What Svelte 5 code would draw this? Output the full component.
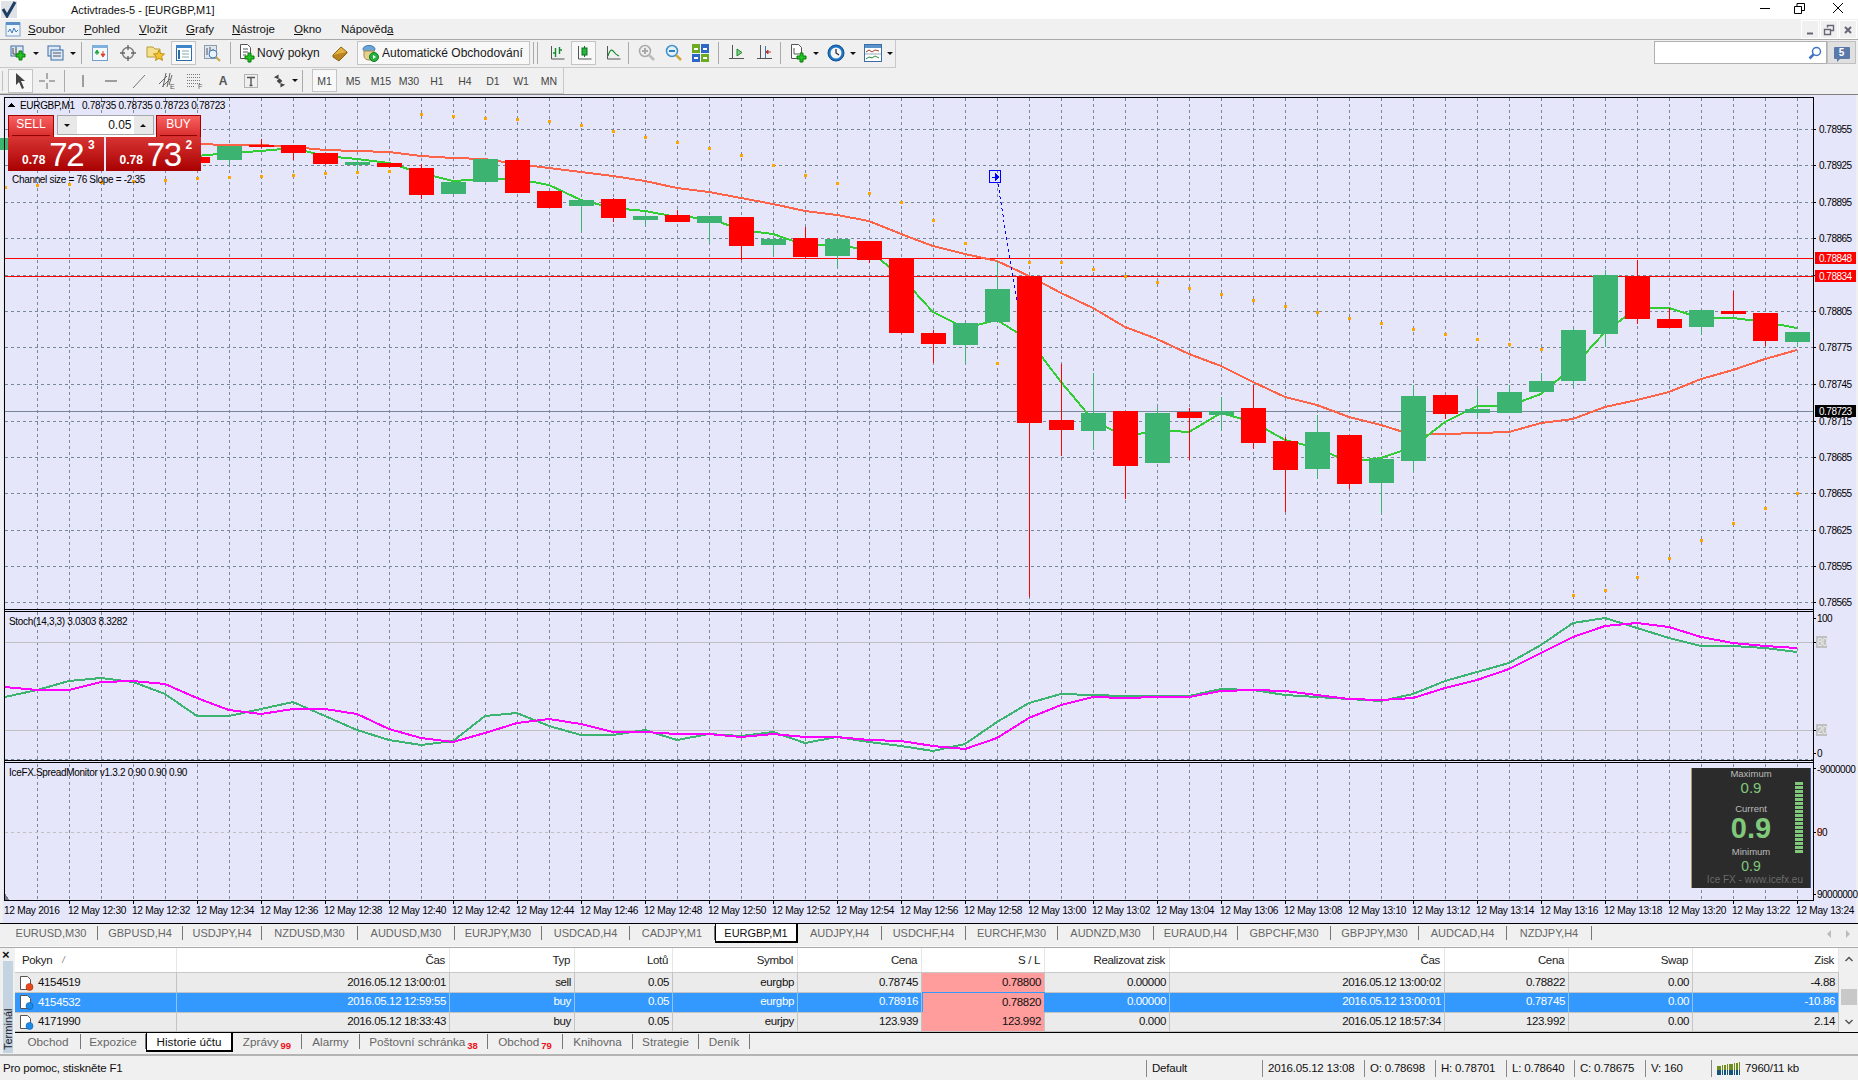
<script>
  const gridX = Array.from({ length: 56 }, (_, i) => 37 + 32 * i);
  const gridY = [129, 165, 202, 238, 275, 311, 347, 384, 421, 457, 493, 530, 566, 602];
  const priceLabels = [
    [129, '0.78955'], [165, '0.78925'], [202, '0.78895'], [238, '0.78865'], [311, '0.78805'], [347, '0.78775'],
    [384, '0.78745'], [421, '0.78715'], [457, '0.78685'], [493, '0.78655'], [530, '0.78625'], [566, '0.78595'], [602, '0.78565']
  ];

  // x, body top, body bottom, wick top, wick bottom, up
  const candles = [
    [5, 138, 150, 138, 150, 1], [197, 157, 163, 157, 163, 0], [229, 146, 160, 146, 165, 1], [261, 145, 147, 139, 148, 0],
    [293, 145, 153, 145, 160, 0], [325, 153, 164, 153, 165, 0], [357, 162, 165, 158, 172, 1], [389, 163, 167, 163, 168, 0],
    [421, 168, 195, 164, 199, 0], [453, 182, 194, 182, 194, 1], [485, 159, 182, 159, 182, 1], [517, 160, 193, 160, 193, 0],
    [549, 191, 208, 191, 208, 0], [581, 200, 206, 200, 232, 1], [613, 199, 218, 198, 222, 0], [645, 216, 220, 211, 226, 1],
    [677, 215, 222, 210, 222, 0], [709, 216, 223, 216, 243, 1], [741, 217, 246, 217, 260, 0], [773, 239, 245, 239, 256, 1],
    [805, 238, 257, 227, 259, 0], [837, 239, 256, 239, 268, 1], [869, 241, 260, 241, 263, 0], [901, 258, 333, 258, 334, 0],
    [933, 333, 344, 330, 363, 0], [965, 323, 345, 323, 364, 1], [997, 289, 322, 261, 322, 1], [1029, 276, 423, 276, 597, 0],
    [1061, 420, 430, 364, 456, 0], [1093, 413, 431, 373, 450, 1], [1125, 411, 466, 411, 499, 0], [1157, 413, 463, 407, 463, 1],
    [1189, 412, 418, 408, 460, 0], [1221, 411, 415, 397, 430, 1], [1253, 408, 443, 385, 449, 0], [1285, 441, 470, 437, 512, 0],
    [1317, 432, 469, 415, 478, 1], [1349, 435, 484, 435, 489, 0], [1381, 459, 483, 457, 514, 1], [1413, 396, 461, 385, 472, 1],
    [1445, 395, 414, 395, 419, 0], [1477, 409, 413, 389, 418, 1], [1509, 392, 413, 385, 413, 1], [1541, 381, 392, 373, 392, 1],
    [1573, 330, 381, 328, 387, 1], [1605, 275, 334, 270, 347, 1], [1637, 276, 319, 260, 324, 0], [1669, 319, 328, 308, 328, 0],
    [1701, 310, 327, 310, 334, 1], [1733, 311, 314, 291, 314, 0], [1765, 313, 341, 313, 346, 0], [1797, 332, 342, 332, 347, 1]
  ];

  const pts = (ys, first) => ys.map((y, i) => `${5 + 32 * (first + i)},${y}`).join(' ');

  const slowMa = pts([144, 145, 145, 147, 150, 151, 152, 156, 158, 159, 164, 168, 172, 176, 181, 188, 192, 198, 204, 211, 215, 221, 234, 246, 254, 261, 276, 293, 308, 327, 339, 354, 366, 382, 397, 405, 417, 425, 435, 434, 433, 432, 423, 419, 407, 400, 392, 379, 370, 359, 350], 6);
  const fastMa = pts([156, 153, 151, 148, 156, 159, 163, 173, 181, 179, 179, 185, 200, 208, 211, 217, 218, 230, 234, 245, 245, 250, 277, 312, 328, 320, 340, 382, 420, 437, 430, 432, 413, 422, 440, 448, 462, 458, 447, 422, 406, 406, 394, 367, 332, 308, 308, 318, 318, 322, 328], 6);
  const stochMain = pts([697, 690, 681, 678, 682, 694, 716, 716, 709, 702, 716, 730, 740, 745, 741, 716, 713, 726, 735, 735, 730, 740, 734, 736, 732, 743, 737, 742, 746, 751, 744, 722, 703, 694, 695, 696, 696, 696, 689, 690, 695, 697, 699, 701, 694, 681, 672, 663, 645, 623, 618, 628, 638, 646, 646, 648, 652], 0);
  const stochSignal = pts([687, 690, 690, 682, 681, 684, 698, 710, 714, 709, 709, 714, 729, 738, 742, 733, 723, 719, 724, 732, 732, 734, 734, 737, 734, 737, 737, 740, 741, 746, 749, 738, 718, 705, 697, 698, 697, 697, 691, 690, 691, 695, 699, 700, 698, 688, 680, 669, 653, 637, 626, 623, 627, 637, 643, 646, 648], 0);

  const dots = [
    [421, 114], [453, 116], [485, 118], [517, 119], [549, 121], [581, 125], [613, 131], [645, 137], [677, 142], [709, 148], [741, 155], [773, 165], [805, 175], [837, 183], [869, 193], [901, 202], [933, 220], [965, 243], [997, 363],
    [5, 187], [37, 185], [69, 184], [101, 182], [133, 181], [165, 180], [197, 178], [229, 177], [261, 176], [293, 175], [325, 173], [357, 172], [389, 171],
    [1029, 262], [1061, 262], [1093, 269], [1125, 276], [1157, 282], [1189, 288], [1221, 294], [1253, 300], [1285, 306], [1317, 312], [1349, 318], [1381, 323], [1413, 329], [1445, 334], [1477, 339], [1509, 344], [1541, 349],
    [1573, 595], [1605, 590], [1637, 577], [1669, 558], [1701, 540], [1733, 523], [1765, 508], [1797, 493]
  ];

  const timeLabels = Array.from({ length: 28 }, (_, i) => {
    const mins = 12 * 60 + 30 + i * 2;
    return { x: 68 + i * 64, text: `12 May ${Math.floor(mins / 60)}:${String(mins % 60).padStart(2, '0')}` };
  });

  const symbols = [
    ['EURUSD,M30', 93], ['GBPUSD,H4', 85], ['USDJPY,H4', 79], ['NZDUSD,M30', 96], ['AUDUSD,M30', 97], ['EURJPY,M30', 87],
    ['USDCAD,H4', 88], ['CADJPY,M1', 85], ['EURGBP,M1', 83], ['AUDJPY,H4', 84], ['USDCHF,H4', 84], ['EURCHF,M30', 92],
    ['AUDNZD,M30', 96], ['EURAUD,H4', 84], ['GBPCHF,M30', 93], ['GBPJPY,M30', 88], ['AUDCAD,H4', 88], ['NZDJPY,H4', 85]
  ];

  const termTabs = [
    ['Obchod', 65], ['Expozice', 65], ['Historie účtu', 87], ['Zprávy', 69, '99'], ['Alarmy', 58],
    ['Poštovní schránka', 128, '38'], ['Obchod', 75, '79'], ['Knihovna', 70], ['Strategie', 66], ['Deník', 51]
  ];

  const columns = [
    ['Pokyn', 'left'], ['Čas'], ['Typ'], ['Lotů'], ['Symbol'], ['Cena'], ['S / L', 'sl'], ['Realizovat zisk'], ['Čas'], ['Cena'], ['Swap'], ['Zisk']
  ];
  const rows = [
    ['4154519', '2016.05.12 13:00:01', 'sell', '0.05', 'eurgbp', '0.78745', '0.78800', '0.00000', '2016.05.12 13:00:02', '0.78822', '0.00', '-4.88'],
    ['4154532', '2016.05.12 12:59:55', 'buy', '0.05', 'eurgbp', '0.78916', '0.78820', '0.00000', '2016.05.12 13:00:01', '0.78745', '0.00', '-10.86'],
    ['4171990', '2016.05.12 18:33:43', 'buy', '0.05', 'eurjpy', '123.939', '123.992', '0.000', '2016.05.12 18:57:34', '123.992', '0.00', '2.14']
  ];
  const periods = ['M5', 'M15', 'M30', 'H1', 'H4', 'D1', 'W1', 'MN'];
  const statusCells = ['2016.05.12 13:08', 'O: 0.78698', 'H: 0.78701', 'L: 0.78640', 'C: 0.78675', 'V: 160'];
</script>

<div class="app">
  <header class="titlebar">
    <svg class="app-icon" width="16" height="17" viewBox="0 0 16 17"><rect width="16" height="17" fill="#dfe3e8"/><path d="M2 8l4 7L14 1" fill="none" stroke="#1d3f66" stroke-width="3"/></svg>
    <span class="title-text">Activtrades-5 - [EURGBP,M1]</span>
    <div class="win-btns">
      <svg width="38" height="19" viewBox="0 0 38 19"><path d="M14 8.500h10" stroke="#000" fill="none"/></svg>
      <svg width="38" height="19" viewBox="0 0 38 19"><path d="M10.500 6.500h7v7h-7zM13 6V3.500h7.500v7H18" stroke="#000" fill="none"/></svg>
      <svg width="32" height="19" viewBox="0 0 32 19"><path d="M11 3l10 10M21 3L11 13" stroke="#000" fill="none"/></svg>
    </div>
  </header>

  <nav class="menubar">
    <svg class="menu-icon" width="16" height="16" viewBox="0 0 16 16"><rect x="1" y="2" width="14" height="13" fill="#eef4fb" stroke="#7b9ec4"/><rect x="1" y="1" width="14" height="3" fill="#5b8fc9"/><path d="M3 11l2-3 2 4 2-5 2 4 2-2" fill="none" stroke="#3c78b8"/></svg>
    <span class="m" style="--m:28px"><u>S</u>oubor</span>
    <span class="m" style="--m:84px"><u>P</u>ohled</span>
    <span class="m" style="--m:139px"><u>V</u>ložit</span>
    <span class="m" style="--m:186px"><u>G</u>rafy</span>
    <span class="m" style="--m:232px"><u>N</u>ástroje</span>
    <span class="m" style="--m:294px"><u>O</u>kno</span>
    <span class="m" style="--m:341px">Nápověd<u>a</u></span>
    <div class="mdi">
      <span class="mdi-btn"><svg width="10" height="10" viewBox="0 0 10 10"><path d="M2 8.500h6" stroke="#667" stroke-width="2"/></svg></span>
      <span class="mdi-btn"><svg width="12" height="12" viewBox="0 0 12 12"><path d="M1.500 5.500h6v5h-6zM4.500 3.500v-2h6v5h-3" stroke="#667" fill="none" stroke-width="1.400"/></svg></span>
      <span class="mdi-btn"><svg width="10" height="10" viewBox="0 0 10 10"><path d="M2 2l6 6M8 2l-6 6" stroke="#667" stroke-width="2"/></svg></span>
    </div>
  </nav>

  <div class="toolrow one">
    <div class="toolbar">
      <span class="grip"></span>
      <button class="drop">
        <svg width="18" height="18" viewBox="0 0 18 18"><rect x="1" y="2" width="12" height="10" fill="#dfe9f6" stroke="#3a6ea5"/><path d="M3 4v6h8M6 3v6" stroke="#444" fill="none"/><path d="M9 7h3v3h3v3h-3v3H9v-3H6v-3h3z" fill="#25c225" stroke="#0a7a0a"/></svg>
        <i class="caret"></i>
      </button>
      <button class="drop narrow">
        <svg width="18" height="18" viewBox="0 0 18 18"><rect x="1" y="2" width="12" height="10" fill="#dfe9f6" stroke="#3a6ea5"/><rect x="4" y="6" width="12" height="10" fill="#dfe9f6" stroke="#3a6ea5"/><path d="M6 9h8M6 12h8" stroke="#556"/></svg>
        <i class="caret"></i>
      </button>
      <span class="sep"></span>
      <button class="ib">
        <svg width="18" height="18" viewBox="0 0 18 18"><rect x="1.500" y="1.500" width="15" height="15" fill="#f4f8fc" stroke="#6f9fcf"/><rect x="1" y="1" width="16" height="3" fill="#7fb0de"/><path d="M6 11V7M4 9l2-3 2 3z" fill="#21a83a" stroke="#21a83a"/><path d="M12 7v4M10 10l2 3 2-3z" fill="#e0452b" stroke="#e0452b"/></svg>
      </button>
      <button class="ib">
        <svg width="18" height="18" viewBox="0 0 18 18"><circle cx="9" cy="9" r="5.500" fill="none" stroke="#7a7a7a" stroke-width="1.400"/><path d="M9 1v5M9 12v5M1 9h5M12 9h5" stroke="#666" stroke-width="1.400"/></svg>
      </button>
      <button class="ib">
        <svg width="20" height="18" viewBox="0 0 20 18"><path d="M1 3h6l2 2h5v8H1z" fill="#f5e08c" stroke="#b99a3a"/><path d="M13 6l1.600 3.600 3.900.4-2.900 2.600.9 3.800L13 14.400 9.500 16.400l.9-3.800L7.500 10l3.900-.4z" fill="#f2c230" stroke="#c08f10"/></svg>
      </button>
      <button class="ib active">
        <svg width="18" height="18" viewBox="0 0 18 18"><rect x="1.500" y="1.500" width="15" height="15" fill="#fff" stroke="#2e6da8"/><rect x="1" y="1" width="16" height="3" fill="#3c85c9"/><path d="M4 6v9" stroke="#2e6da8" stroke-width="2"/><path d="M7 7h7M7 10h7M7 13h7" stroke="#8aa"/></svg>
      </button>
      <button class="ib">
        <svg width="20" height="20" viewBox="0 0 20 20"><rect x="2.500" y="2.500" width="12" height="13" fill="#dfe6ee" stroke="#8a9bb0"/><path d="M5 5v7M8 4v6M11 6v5" stroke="#556"/><circle cx="11" cy="11" r="4" fill="#eaf3fb" stroke="#3f78b5"/><path d="M14 14l4 4" stroke="#c9a94a" stroke-width="2"/></svg>
      </button>
      <span class="sep"></span>
      <button class="labelled">
        <svg width="18" height="20" viewBox="0 0 18 20"><path d="M2.500 1.500h7l3 3v11h-10z" fill="#fff" stroke="#555"/><path d="M5 6h5M5 9h5M5 12h3" stroke="#555"/><path d="M10 10h3v3h3v3h-3v3h-3v-3H7v-3h3z" fill="#25c225" stroke="#0a7a0a"/></svg>
        <span>Nový pokyn</span>
      </button>
      <button class="ib book">
        <svg width="18" height="18" viewBox="0 0 18 18"><path d="M2 11l8-8 6 5-8 8z" fill="#e0b040" stroke="#8c6414"/><path d="M2 11v2l6 4 8-8V8" fill="#b9841f" stroke="#8c6414"/></svg>
      </button>
      <button class="labelled auto">
        <svg width="18" height="18" viewBox="0 0 18 18"><ellipse cx="8" cy="5" rx="6" ry="3.500" fill="#6aa6d8" stroke="#3f78b5"/><path d="M3 7h10v5a5 4 0 0 1-10 0z" fill="#e6cf8f" stroke="#a5894a"/><circle cx="13" cy="13" r="4.500" fill="#24b33c" stroke="#0e7a22"/><path d="M12 11l3 2-3 2z" fill="#fff"/></svg>
        <span>Automatické Obchodování</span>
      </button>
      <span class="sep dbl"></span>
      <button class="ib chart-bar">
        <svg width="16" height="16" viewBox="0 0 16 16"><path d="M2.500 1v13h13" fill="none" stroke="#555"/><path d="M6.500 3v9M6.500 8H4M10.500 2v7M10.500 5H13" stroke="#118a2c" stroke-width="1.400"/></svg>
      </button>
      <button class="ib active chart-candle">
        <svg width="16" height="16" viewBox="0 0 16 16"><path d="M2.500 1v13h13" fill="none" stroke="#555"/><rect x="6" y="3" width="5" height="7" fill="#25b63c" stroke="#0c6e1e"/><path d="M8.500 1v2M8.500 10v2" stroke="#0c6e1e"/></svg>
      </button>
      <button class="ib chart-line">
        <svg width="16" height="16" viewBox="0 0 16 16"><path d="M2.500 1v13h13" fill="none" stroke="#555"/><path d="M3 11c2-7 4-7 6-4s3 3 5 4" fill="none" stroke="#118a2c" stroke-width="1.200"/></svg>
      </button>
      <span class="sep tight"></span>
      <button class="ib zoomer">
        <svg width="18" height="18" viewBox="0 0 18 18"><circle cx="7" cy="7" r="5.500" fill="#eee" stroke="#aaa" stroke-width="1.500"/><path d="M4 7h6M7 4v6" stroke="#aaa" stroke-width="2"/><path d="M11 11l5 5" stroke="#bbb" stroke-width="2.500"/></svg>
      </button>
      <button class="ib zoomer">
        <svg width="18" height="18" viewBox="0 0 18 18"><circle cx="7" cy="7" r="5.500" fill="#e3f1fb" stroke="#3d8fce" stroke-width="1.500"/><path d="M4 7h6" stroke="#2f7fbf" stroke-width="2"/><path d="M11 11l5 5" stroke="#d0a840" stroke-width="2.500"/></svg>
      </button>
      <button class="ib zoomer">
        <svg width="17" height="18" viewBox="0 0 17 18"><rect x="0" y="0" width="8" height="9" fill="#6cab1f"/><rect x="9" y="0" width="8" height="9" fill="#2f67c8"/><rect x="0" y="10" width="8" height="8" fill="#2f67c8"/><rect x="9" y="10" width="8" height="8" fill="#6cab1f"/><path d="M2 5h4M11 5h4M2 14h4M11 14h4" stroke="#fff" stroke-width="2"/></svg>
      </button>
      <span class="sep"></span>
      <button class="ib shifter">
        <svg width="16" height="18" viewBox="0 0 16 18"><path d="M3.500 1v14M0 14.500h15" stroke="#555" fill="none"/><path d="M8 5v7l5-3.500z" fill="#7fd07f" stroke="#1d8a2e"/></svg>
      </button>
      <button class="ib shifter">
        <svg width="16" height="18" viewBox="0 0 16 18"><path d="M3.500 1v14M0 14.500h15" stroke="#555" fill="none"/><path d="M8.500 2v12" stroke="#2c7ab8"/><path d="M14 8h-3M11 6v4l-2-2z" fill="#b33" stroke="#b33"/></svg>
      </button>
      <span class="sep near"></span>
      <button class="drop wide">
        <svg width="18" height="20" viewBox="0 0 18 20"><path d="M1.500 1.500h7l3 3v11h-10z" fill="#fff" stroke="#555"/><path d="M4 5v6M4 11h5" stroke="#555"/><path d="M10 10h3v3h3v3h-3v3h-3v-3H7v-3h3z" fill="#25c225" stroke="#0a7a0a"/></svg>
        <i class="caret"></i>
      </button>
      <button class="drop wide">
        <svg width="18" height="18" viewBox="0 0 18 18"><circle cx="9" cy="9" r="8" fill="#1e74c4" stroke="#0d4f8f"/><circle cx="9" cy="9" r="5.500" fill="#f4f6f8"/><path d="M9 5v4l3 2" fill="none" stroke="#222" stroke-width="1.200"/></svg>
        <i class="caret"></i>
      </button>
      <button class="drop wide">
        <svg width="18" height="18" viewBox="0 0 18 18"><rect x="0.500" y="0.500" width="17" height="17" fill="#fff" stroke="#3a6ea5"/><rect x="1" y="1" width="16" height="3" fill="#5b93cf"/><path d="M2 8l3-2 3 2 3-2 4 1" fill="none" stroke="#9c3a2a"/><path d="M1 10h16" stroke="#9ab"/><path d="M2 15l3-2 3 1 3-2 4 2" fill="none" stroke="#2a8c3a"/></svg>
        <i class="caret"></i>
      </button>
    </div>
    <div class="search-wrap">
      <div class="search">
        <svg width="14" height="14" viewBox="0 0 14 14"><circle cx="8.500" cy="5.500" r="4" fill="#fff" stroke="#3f73c4" stroke-width="1.500"/><path d="M5.500 8.500L1.500 12.500" stroke="#3f73c4" stroke-width="2.500"/></svg>
      </div>
      <div class="msg">
        <span class="bubble">5</span>
      </div>
    </div>
  </div>

  <div class="toolrow two">
    <div class="toolbar">
      <span class="grip"></span>
      <button class="ib active arrow">
        <svg width="12" height="18" viewBox="0 0 12 18"><path d="M1 1l9 8H6l3 7-2 1-3-7-3 3z" fill="#444"/></svg>
      </button>
      <button class="ib tool">
        <svg width="16" height="16" viewBox="0 0 16 16"><path d="M8 0v6M8 10v6M0 8h6M10 8h6" stroke="#666"/></svg>
      </button>
      <span class="sep"></span>
      <button class="ib line">
        <svg width="16" height="16" viewBox="0 0 16 16"><path d="M8 2v12" stroke="#666" stroke-width="1.200"/></svg>
      </button>
      <button class="ib line">
        <svg width="16" height="16" viewBox="0 0 16 16"><path d="M2 8h12" stroke="#666" stroke-width="1.200"/></svg>
      </button>
      <button class="ib line">
        <svg width="16" height="16" viewBox="0 0 16 16"><path d="M2 15L14 2" stroke="#777"/></svg>
      </button>
      <button class="ib line">
        <svg width="18" height="18" viewBox="0 0 18 18"><path d="M1 12l8-8M4 15l8-8M8 1l-3 14M12 1L9 15M14 3L11 13" stroke="#666" fill="none"/><text x="12" y="17" class="sub">E</text></svg>
      </button>
      <button class="ib line">
        <svg width="18" height="18" viewBox="0 0 18 18"><path d="M1 2.500h13M1 5.500h13M1 8.500h13M1 11.500h13M1 14.500h8" stroke="#777" stroke-dasharray="1 1"/><text x="12" y="17" class="sub">F</text></svg>
      </button>
      <button class="ib line a">A</button>
      <button class="ib line">
        <svg width="16" height="16" viewBox="0 0 16 16"><rect x="1.500" y="1.500" width="13" height="13" fill="none" stroke="#777" stroke-dasharray="1 1"/><path d="M4 4.500h8M8 4.500v8M6.500 12.500h3" stroke="#555" stroke-width="1.400"/></svg>
      </button>
      <button class="drop tool-drop">
        <svg width="16" height="16" viewBox="0 0 16 16"><path d="M2 4l5-3v5zM14 12l-5 3v-5z" fill="#444"/><path d="M5 8l3 3 3-3-3-3z" fill="#444"/></svg>
        <i class="caret"></i>
      </button>
      <span class="sep"></span>
      <button class="period active">M1</button>
      {#each periods as p}
        <button class="period">{p}</button>
      {/each}
    </div>
  </div>

  <main class="chart-area">
    <svg class="chart" width="1858" height="829" viewBox="0 94 1858 829">
      <rect x="3" y="95" width="1853" height="828" fill="#e6e6fa"/>
      <g shape-rendering="crispEdges">
        <path d="M0 94.500H1858" stroke="#808080"/>
        <!-- grid -->
        {#each gridX as x}
          <path class="grid" d="M{x + 0.5} 98V609M{x + 0.5} 612V760M{x + 0.5} 764V900"/>
        {/each}
        {#each gridY as y}
          <path class="grid" d="M5 {y + 0.5}H1813"/>
        {/each}
        <path class="level" d="M5 642.500H1813M5 730.500H1813"/>
        <path class="zero" d="M5 832.500H1691"/>
        <path class="grid" d="M5 759.500H1813"/>

        <!-- price lines -->
        <path d="M5 258.500H1813" stroke="#f00" fill="none"/>
        <path d="M5 276.500H1813" stroke="#f00" fill="none"/>
        <path d="M5 411.500H1813" stroke="#778899" fill="none"/>

        <polyline points={slowMa} class="ln" stroke="#ff6347"/>
        <polyline points={fastMa} class="ln" stroke="#32cd32"/>

        {#each candles as [x, top, bottom, wt, wb, up]}
          <rect x={x} y={wt} width="1" height={wb - wt} fill={up ? '#3cb371' : '#f00'}/>
          <rect x={x - 12} y={top} width="25" height={bottom - top} fill={up ? '#3cb371' : '#f00'}/>
        {/each}

        {#each dots as [x, y]}
          <rect x={x - 1} y={y - 1} width="3" height="3" fill="#ffa500"/>
        {/each}

        <rect x="989.500" y="170.500" width="11" height="12" fill="none" stroke="#00f"/>
        <path d="M992 177h6M995 173l4 4-4 4z" fill="#00f" stroke="#00f"/>
        <path d="M998 184L1017 303" stroke="#00f" stroke-dasharray="3 3" fill="none"/>

        <polyline points={stochMain} class="ln" stroke="#3cb371"/>
        <polyline points={stochSignal} class="ln" stroke="#f0f"/>

        <!-- frames -->
        <path class="frame" d="M4.500 97.500H1813.500V900.500H4.500ZM4.500 609.500H1813.500M4.500 611.500H1813.500M4.500 760.500H1813.500M4.500 762.500H1813.500"/>
        {#each gridY as y}
          <path d="M1813 {y + 0.5}h3" stroke="#000"/>
        {/each}
        <path d="M1813 618.500h3M1813 642.500h3M1813 730.500h3M1813 753.500h3M1813 768.500h3M1813 832.500h3M1813 894.500h3" stroke="#000"/>
        {#each timeLabels as t}
          <path d="M{t.x + 1.500} 900v4" stroke="#000"/>
        {/each}
        <path d="M5 893v7h4z" fill="#778"/>
        <path d="M8 107l3.500-4 3.500 4z" fill="#000"/>
      </g>

      <text x="20" y="109" class="t">EURGBP,M1&nbsp;&nbsp;&nbsp;0.78735 0.78735 0.78723 0.78723</text>
      <text x="12" y="183" class="t">Channel size = 76 Slope = -2.35</text>
      <text x="9" y="625" class="t">Stoch(14,3,3) 3.0303 8.3282</text>
      <text x="9" y="776" class="t">IceFX.SpreadMonitor v1.3.2 0.90 0.90 0.90</text>

      {#each priceLabels as [y, label]}
        <text x="1819" y={y + 4} class="t axis">{label}</text>
      {/each}
      <rect x="1815" y="252" width="41" height="12" fill="#f00"/>
      <text x="1819" y="262" class="t axis white">0.78848</text>
      <rect x="1815" y="270" width="41" height="12" fill="#f00"/>
      <text x="1819" y="280" class="t axis white">0.78834</text>
      <rect x="1815" y="405" width="41" height="12" fill="#000"/>
      <text x="1819" y="415" class="t axis white">0.78723</text>

      <text x="1817" y="622" class="t axis">100</text>
      <rect x="1816" y="636" width="11" height="12" fill="#c0c0c0"/>
      <text x="1817" y="646" class="t axis pale">80</text>
      <rect x="1816" y="724" width="11" height="12" fill="#c0c0c0"/>
      <text x="1817" y="734" class="t axis pale">20</text>
      <text x="1817" y="757" class="t axis">0</text>
      <text x="1817" y="773" class="t axis">-9000000</text>
      <text x="1817" y="836" class="t axis">90</text>
      <text x="1817" y="836" class="t axis redz">0</text>
      <text x="1817" y="898" class="t axis">90000000</text>

      <text x="4" y="914" class="t time">12 May 2016</text>
      {#each timeLabels as t}
        <text x={t.x} y="914" class="t time">{t.text}</text>
      {/each}
    </svg>

    <div class="trade">
      <div class="trade-top">
        <button class="side"><span>SELL</span></button>
        <div class="lots">
          <span class="spin"><i class="tri down"></i></span>
          <span class="lot-val">0.05</span>
          <span class="spin"><i class="tri up"></i></span>
        </div>
        <button class="side buy"><span>BUY</span></button>
      </div>
      <div class="trade-bottom">
        <div class="quote"><small>0.78</small><strong>72</strong><sup>3</sup></div>
        <div class="quote"><small>0.78</small><strong>73</strong><sup>2</sup></div>
      </div>
    </div>

    <div class="spread">
      <div class="sp-label">Maximum</div>
      <div class="sp-val">0.9</div>
      <div class="sp-label cur">Current</div>
      <div class="sp-big">0.9</div>
      <div class="sp-label min">Minimum</div>
      <div class="sp-val small">0.9</div>
      <div class="sp-credit">Ice FX - www.icefx.eu</div>
      <div class="sp-meter"></div>
    </div>
  </main>

  <div class="symbols">
    {#each symbols as [name, w]}
      <span class="sym" class:active={name === 'EURGBP,M1'} style="width:{w}px">{name}</span>
    {/each}
    <span class="sym-arrows">
      <svg width="8" height="10" viewBox="0 0 8 10"><path d="M6 1L2 5l4 4" fill="#bbb"/></svg>
      <svg width="8" height="10" viewBox="0 0 8 10"><path d="M2 1l4 4-4 4" fill="#bbb"/></svg>
    </span>
  </div>

  <section class="terminal">
    <aside class="term-side">
      <span class="term-close">×</span>
      <span class="term-label">Terminál</span>
    </aside>
    <div class="term-main">
      <div class="term-table-wrap">
        <div class="term-table">
          <div class="tr head">
            {#each columns as [label, kind]}
              <div class="td" class:left={kind === 'left'}>
                {label}{#if kind === 'left'}<em class="sort">/</em>{/if}
              </div>
            {/each}
          </div>
          {#each rows as row, r}
            <div class="tr" class:sel={r === 1}>
              {#each row as cell, c}
                <div class="td" class:left={c === 0} class:stop={c === 6}>
                  {#if c === 0}
                    <svg width="15" height="16" viewBox="0 0 15 16"><path d="M1.500 1.500h7l3 3v10h-10z" fill="#fff" stroke="#555"/><circle cx="10.500" cy="12" r="3.500" fill={r === 0 ? '#e8481c' : '#1c8ae8'} stroke={r === 0 ? '#a52c08' : '#0c5fa8'} stroke-width="0.600"/></svg>
                  {/if}
                  {cell}
                </div>
              {/each}
            </div>
          {/each}
        </div>
        <div class="scrollbar">
          <svg width="10" height="8" viewBox="0 0 10 8"><path d="M1.500 6L5 2.500 8.500 6" fill="none" stroke="#555" stroke-width="1.500"/></svg>
          <span class="thumb"></span>
          <svg width="10" height="8" viewBox="0 0 10 8"><path d="M1.500 2L5 5.500 8.500 2" fill="none" stroke="#555" stroke-width="1.500"/></svg>
        </div>
      </div>
      <div class="term-tabs">
        {#each termTabs as [name, w, count]}
          <span class="ttab" class:active={name === 'Historie účtu'} style="width:{w}px">{name}{#if count}<b>{count}</b>{/if}</span>
        {/each}
      </div>
    </div>
  </section>

  <footer class="status">
    <span class="st-help">Pro pomoc, stiskněte F1</span>
    <span class="st">Default</span>
    {#each statusCells as cell}
      <span class="st">{cell}</span>
    {/each}
    <span class="st traffic">
      <svg width="24" height="14" viewBox="0 0 24 14" shape-rendering="crispEdges">
        {#each Array(10) as _, i}
          <rect x={i * 2.4} y={5 - i * 0.4} width="1.600" height={4 + i * 0.4} fill="#6f8c1c"/>
          <rect x={i * 2.4} y="9" width="1.600" height="5" fill="#14527a"/>
        {/each}
      </svg>
      7960/11 kb
    </span>
  </footer>
</div>

<style>
  :global(body) {
    margin: 0;
    background: #f0f0f0;
  }

  .app {
    width: 1858px;
    height: 1080px;
    overflow: hidden;
    display: flex;
    flex-direction: column;
    background: #f0f0f0;
    color: #111;
    font-family: "Liberation Sans", sans-serif;
    font-size: 11px;
  }

  button {
    font: inherit;
    color: inherit;
    border: 0;
    padding: 0;
    background: transparent;
  }

  /* window chrome */
  .titlebar {
    height: 19px;
    flex-shrink: 0;
    background: #fff;
    display: flex;
    align-items: center;
    position: relative;
  }

  .app-icon {
    margin-left: 1px;
  }

  .title-text {
    margin-left: 54px;
    font-size: 11px;
  }

  .win-btns {
    margin-left: auto;
    display: flex;
    margin-right: 4px;
  }

  .menubar {
    height: 20px;
    flex-shrink: 0;
    border-bottom: 1px solid #a9a9a9;
    display: flex;
    align-items: center;
    position: relative;
    font-size: 11.500px;
  }

  .menu-icon {
    margin-left: 5px;
  }

  .m {
    position: absolute;
    left: var(--m);
  }

  .mdi {
    margin-left: auto;
    display: flex;
    gap: 1px;
    margin-right: 1px;
    align-self: flex-end;
  }

  .mdi-btn {
    width: 16px;
    height: 17px;
    border: 1px solid #fff;
    display: flex;
    align-items: center;
    justify-content: center;
  }

  /* toolbars */
  .toolrow {
    flex-shrink: 0;
    display: flex;
    justify-content: space-between;
  }

  .toolrow.one {
    height: 28px;
  }

  .toolrow.two {
    height: 26px;
  }

  .toolbar {
    display: flex;
    align-items: center;
    height: 100%;
    box-sizing: border-box;
    border-right: 1px solid #c8c8c8;
    border-bottom: 1px solid #c8c8c8;
  }

  .one .toolbar {
    width: 896px;
    padding-bottom: 1px;
  }

  .two .toolbar {
    width: 564px;
  }

  .grip {
    width: 1px;
    height: 20px;
    margin: 0 5px 0 2px;
    background: #c0c0c0;
  }

  .sep {
    width: 1px;
    height: 22px;
    background: #aaa;
    margin: 0 4px;
    flex-shrink: 0;
  }

  .sep.dbl {
    width: 3px;
    border-left: 1px solid #aaa;
    border-right: 1px solid #aaa;
    background: transparent;
    margin: 0 5px 0 3px;
  }

  .sep.tight {
    margin: 0 4px 0 0;
  }

  .sep.near {
    margin: 0 4px 0 1px;
  }

  .ib {
    width: 28px;
    height: 24px;
    flex-shrink: 0;
    display: flex;
    align-items: center;
    justify-content: center;
    box-sizing: border-box;
  }

  .ib.active {
    width: 25px;
    margin: 0 2px 0 1px;
    background: #f8f8f8;
    border: 1px solid #c4c4c4;
  }

  .drop {
    height: 24px;
    width: 37px;
    flex-shrink: 0;
    display: flex;
    align-items: center;
    gap: 2px;
    padding-left: 3px;
    box-sizing: border-box;
  }

  .drop.narrow {
    width: 33px;
  }

  .drop.wide {
    width: 37px;
    padding-left: 5px;
  }

  .caret {
    width: 0;
    height: 0;
    margin-left: 3px;
    border-left: 3px solid transparent;
    border-right: 3px solid transparent;
    border-top: 3px solid #111;
  }

  .labelled {
    height: 24px;
    display: flex;
    align-items: center;
    gap: 1px;
    flex-shrink: 0;
    font-size: 12px;
    color: #1a1a1a;
    white-space: nowrap;
    padding-left: 3px;
    width: 89px;
  }

  .ib.book {
    width: 32px;
  }

  .labelled.auto {
    width: 173px;
    box-sizing: border-box;
    background: #f8f8f8;
    border: 1px solid #c4c4c4;
    padding-left: 3px;
    margin-left: 1px;
    gap: 3px;
  }

  .ib.chart-bar {
    width: 28px;
  }

  .ib.active.chart-candle {
    width: 25px;
    margin: 0 2px 0 0;
  }

  .ib.chart-line {
    width: 30px;
  }

  .ib.zoomer {
    width: 27px;
  }

  .two .ib.arrow {
    width: 25px;
    margin: 0;
  }

  .ib.tool {
    width: 27px;
  }

  .line.a {
    font-size: 12px;
    font-weight: 700;
    color: #555;
  }

  .drop.tool-drop {
    width: 33px;
    padding-left: 7px;
  }

  .sub {
    font-size: 7px;
    fill: #555;
  }

  .period {
    width: 28px;
    height: 23px;
    flex-shrink: 0;
    color: #444;
    font-size: 10.500px;
    box-sizing: border-box;
  }

  .period.active {
    width: 25px;
    margin-right: 2px;
    margin-left: 5px;
    background: #f8f8f8;
    border: 1px solid #c4c4c4;
  }

  .search-wrap {
    display: flex;
    align-items: flex-start;
    padding-top: 1px;
    margin-right: 2px;
    height: 23px;
  }

  .search {
    width: 173px;
    height: 23px;
    box-sizing: border-box;
    background: #fff;
    border: 1px solid #b0b0b0;
    display: flex;
    align-items: center;
    justify-content: flex-end;
    padding-right: 4px;
  }

  .msg {
    width: 29px;
    height: 23px;
    box-sizing: border-box;
    border: 1px solid #c0c0c0;
    background: #e0e0e0;
    display: flex;
    align-items: center;
    justify-content: center;
  }

  .bubble {
    width: 16px;
    height: 12px;
    background: #5a79a8;
    color: #fff;
    font-size: 10px;
    font-weight: 700;
    text-align: center;
    line-height: 12px;
    border-radius: 1px;
    position: relative;
  }

  .bubble::after {
    content: '';
    position: absolute;
    left: 3px;
    top: 12px;
    border-top: 3px solid #5a79a8;
    border-right: 3px solid transparent;
  }

  /* chart */
  .chart-area {
    position: relative;
    height: 829px;
    flex-shrink: 0;
  }

  .chart {
    display: block;
  }

  .grid {
    stroke: #778899;
    stroke-dasharray: 3 3;
    fill: none;
  }

  .level {
    stroke: #c0c0c0;
    fill: none;
  }

  .zero {
    stroke: #c0c0c0;
    stroke-dasharray: 3 3;
    fill: none;
  }

  .frame {
    stroke: #000;
    fill: none;
  }

  .ln {
    fill: none;
    stroke-width: 2;
  }

  .t {
    font-size: 10px;
    letter-spacing: -0.320px;
    fill: #000;
  }

  .axis {
    letter-spacing: -0.500px;
  }

  .time {
    font-size: 10.200px;
    letter-spacing: -0.300px;
  }

  .white {
    fill: #fff;
  }

  .pale {
    fill: #eee;
  }

  .redz {
    fill: #c03000;
  }

  .trade {
    position: absolute;
    left: 8px;
    top: 21px;
    width: 193px;
  }

  .trade-top {
    height: 22px;
    display: flex;
    justify-content: space-between;
    background: linear-gradient(#e6e6fa 20px, #fff 20px);
  }

  .side {
    width: 46px;
    height: 22px;
    box-sizing: border-box;
    background: linear-gradient(#f86060, #d92c2c);
    border: 1px solid #a50000;
    border-bottom: 0;
    color: #fff;
    font-size: 12px;
    padding: 0 3px;
  }

  .side span {
    display: block;
    padding-bottom: 4px;
    border-bottom: 1px solid #930000;
  }

  .side.buy {
    width: 45px;
  }

  .lots {
    width: 97px;
    height: 20px;
    box-sizing: border-box;
    border: 1px solid #a8a8a8;
    background: #fff;
    display: flex;
  }

  .spin {
    width: 19px;
    background: #e8e8e8;
    display: flex;
    align-items: center;
    justify-content: center;
    flex-shrink: 0;
  }

  .tri {
    width: 0;
    height: 0;
    border-left: 3px solid transparent;
    border-right: 3px solid transparent;
  }

  .tri.down {
    border-top: 3px solid #111;
  }

  .tri.up {
    border-bottom: 3px solid #111;
  }

  .lot-val {
    flex: 1;
    font-size: 12px;
    text-align: right;
    line-height: 18px;
    padding-right: 2px;
  }

  .trade-bottom {
    display: flex;
    gap: 2px;
  }

  .quote {
    flex: 1;
    height: 34px;
    background: linear-gradient(#d83434, #a90000);
    color: #fff;
    display: flex;
    align-items: flex-start;
    padding-left: 14px;
  }

  .quote small {
    font-size: 12px;
    font-weight: 700;
    margin-top: 16px;
    margin-right: 4px;
  }

  .quote strong {
    font-size: 33px;
    font-weight: 400;
    line-height: 33px;
    letter-spacing: -1.500px;
    margin-top: 1px;
  }

  .quote sup {
    font-size: 12px;
    font-weight: 700;
    line-height: 12px;
    margin-left: 5px;
    margin-top: 2px;
  }

  .spread {
    position: absolute;
    left: 1691px;
    top: 674px;
    width: 120px;
    height: 120px;
    box-sizing: border-box;
    background: #2b2b2b;
    border-left: 1px solid #b09a60;
    border-right: 1px solid #3a5a90;
    color: #bbb;
    text-align: center;
    font-size: 9.500px;
  }

  .sp-label {
    line-height: 12px;
  }

  .sp-val {
    color: #80c87a;
    font-size: 15px;
    line-height: 16px;
  }

  .sp-val.small {
    font-size: 14px;
  }

  .sp-label.cur {
    margin-top: 7px;
  }

  .sp-big {
    color: #80c87a;
    font-size: 29px;
    font-weight: 700;
    line-height: 26px;
  }

  .sp-label.min {
    margin-top: 5px;
  }

  .sp-credit {
    color: #6a6a6a;
    font-size: 10px;
    line-height: 12px;
    text-align: right;
    padding-right: 7px;
    white-space: nowrap;
  }

  .sp-meter {
    position: absolute;
    left: 103px;
    top: 14px;
    width: 8px;
    height: 71px;
    background: repeating-linear-gradient(#80c87a 0 3px, #2b2b2b 3px 4px);
  }

  /* symbol tabs */
  .symbols {
    height: 19px;
    flex-shrink: 0;
    border-top: 1px solid #000;
    padding: 0 0 3px 5px;
    border-bottom: 1px solid #f8f8f8;
    display: flex;
    position: relative;
  }

  .sym {
    flex-shrink: 0;
    height: 14px;
    margin-top: 2px;
    line-height: 14px;
    text-align: center;
    color: #666;
    box-sizing: border-box;
    border-right: 1px solid #777;
    white-space: nowrap;
  }

  .sym.active {
    height: 19px;
    margin-top: 0;
    color: #111;
    background: #fff;
    border: 1px solid #000;
    border-top: 0;
    border-bottom-width: 2px;
    border-right-width: 2px;
    line-height: 18px;
  }

  .sym-arrows {
    margin-left: auto;
    margin-right: 6px;
    display: flex;
    gap: 11px;
    align-items: center;
  }

  /* terminal */
  .terminal {
    height: 109px;
    flex-shrink: 0;
    display: flex;
    border-top: 1px solid #aaa;
    border-bottom: 2px solid #b4b4b4;
    box-sizing: border-box;
  }

  .term-side {
    width: 15px;
    flex-shrink: 0;
    display: flex;
    flex-direction: column;
    align-items: flex-start;
  }

  .term-close {
    font-size: 13px;
    font-weight: 700;
    line-height: 13px;
    padding-left: 2px;
  }

  .term-label {
    margin-left: 3px;
    width: 10px;
    height: 92px;
    padding-top: 3px;
    box-sizing: border-box;
    background: #c4d3e2;
    writing-mode: vertical-rl;
    transform: rotate(180deg);
    color: #222;
    font-size: 11px;
    line-height: 10px;
    text-align: left;
  }

  .term-main {
    flex: 1;
    display: flex;
    flex-direction: column;
    min-width: 0;
    font-size: 11.500px;
    letter-spacing: -0.350px;
  }

  .term-table-wrap {
    display: flex;
    background: #fff;
    border-bottom: 1px solid #000;
  }

  .term-table {
    width: 1824px;
    flex-shrink: 0;
  }

  .tr {
    display: grid;
    grid-template-columns: 162px 273px 125px 98px 125px 124px 123px 125px 275px 124px 124px 146px;
    height: 20px;
    background: #ebebeb;
    line-height: 19px;
  }

  .tr:nth-child(2) {
    height: 19px;
  }

  .tr.head {
    height: 25px;
    background: #fff;
    line-height: 24px;
    color: #222;
    border-bottom: 1px solid #c8c8c8;
    box-sizing: border-box;
  }

  .td {
    box-sizing: border-box;
    padding-right: 3px;
    text-align: right;
    white-space: nowrap;
    border-right: 1px solid #c4c4c4;
    border-bottom: 1px solid #c4c4c4;
    display: block;
  }

  .head .td {
    padding-right: 4px;
    border-bottom: 0;
    border-right-color: #e6e6e6;
  }

  .td.left {
    text-align: left;
    padding-left: 4px;
    display: flex;
    align-items: center;
    gap: 4px;
  }

  .head .td.left {
    gap: 10px;
    padding-left: 7px;
  }

  .sort {
    color: #777;
    font-style: italic;
    font-size: 9px;
  }

  .td.stop {
    background: #ff9c9c;
    color: #111;
    border-right-color: #c4c4c4;
  }

  .tr.sel {
    background: #3399ff;
    color: #fff;
  }

  .tr.sel .td {
    border-right-color: #8cc4f8;
    border-bottom-color: #c4c4c4;
  }

  .tr.sel .td.stop {
    color: #111;
    border: 1px solid #3399ff;
  }

  .scrollbar {
    width: 19px;
    background: #f0f0f0;
    display: flex;
    flex-direction: column;
    align-items: center;
    justify-content: space-between;
    padding: 7px 0 6px;
    box-sizing: border-box;
    position: relative;
  }

  .thumb {
    width: 16px;
    height: 16px;
    background: #c8c8c8;
    margin-top: 12px;
  }

  .term-tabs {
    flex: 1;
    display: flex;
    align-items: flex-start;
    margin-left: 1px;
    font-size: 11.700px;
    letter-spacing: 0;
  }

  .ttab {
    flex-shrink: 0;
    height: 15px;
    margin-top: 1px;
    line-height: 15px;
    text-align: center;
    color: #666;
    box-sizing: border-box;
    border-right: 1px solid #777;
    white-space: nowrap;
  }

  .ttab.active {
    height: 19px;
    margin-top: 0;
    color: #111;
    background: #fff;
    line-height: 17px;
    border: 1px solid #000;
    border-top: 0;
    border-bottom-width: 2px;
    border-right-width: 2px;
  }

  .ttab b {
    color: #f01020;
    font-size: 9.500px;
    position: relative;
    top: 3px;
    margin-left: 2px;
  }

  /* status bar */
  .status {
    flex: 1;
    display: grid;
    grid-template-columns: 1146px 116px 102px 71px 71px 68px 71px 66px 1fr;
    align-items: center;
    font-size: 11.500px;
    letter-spacing: -0.200px;
  }

  .st-help {
    padding-left: 3px;
  }

  .st {
    height: 17px;
    line-height: 17px;
    padding-left: 5px;
    border-left: 1px solid #888;
    white-space: nowrap;
  }

  .traffic {
    display: flex;
    align-items: center;
    gap: 4px;
  }
</style>
